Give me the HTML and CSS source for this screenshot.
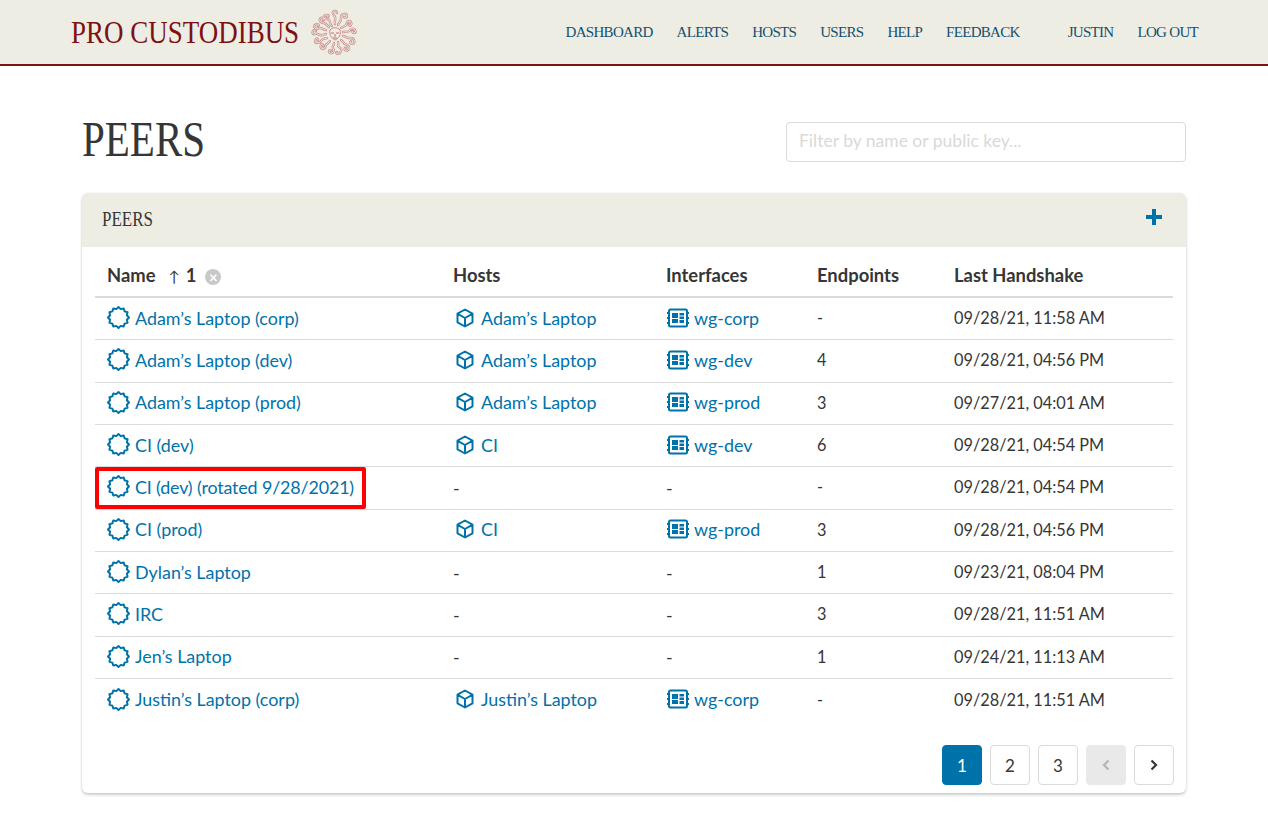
FILE: index.html
```html
<!DOCTYPE html>
<html lang="en">
<head>
<meta charset="utf-8">
<title>Peers - Pro Custodibus</title>
<link rel="stylesheet" href="styles.css">
</head>
<body>
<svg class="defs" width="0" height="0" aria-hidden="true">
  <symbol id="peer" viewBox="0 0 22 22">
    <path fill="none" stroke="currentColor" stroke-width="1.900" stroke-linejoin="round" d="M21 11L19.020 13.150 19.660 16 16.870 16.870 16 19.660 13.150 19.020 11 21 8.850 19.020 6 19.660 5.130 16.870 2.340 16 2.980 13.150 1 11 2.980 8.850 2.340 6 5.130 5.130 6 2.340 8.850 2.980 11 1 13.150 2.980 16 2.340 16.870 5.130 19.660 6 19.020 8.850z"/>
  </symbol>
  <symbol id="cube" viewBox="0 0 20 20">
    <path fill="none" stroke="currentColor" stroke-width="2" stroke-linejoin="round" d="M10 1.500l7.500 4.200v8.600L10 18.500l-7.500-4.200V5.700zM2.700 5.800L10 10l7.300-4.200M10 10v8.500"/>
  </symbol>
  <symbol id="iface" viewBox="0 0 22 20">
    <rect x="2" y="1.500" width="18" height="17" rx="1.500" fill="none" stroke="currentColor" stroke-width="2"/>
    <path fill="currentColor" d="M0 4h2v2H0zM0 9h2v2H0zM0 14h2v2H0zM20 4h2v2h-2zM20 9h2v2h-2zM20 14h2v2h-2zM5 5h6v5H5zM5 11h6v4H5zM12.500 5H17v2.500h-4.500zM12.500 8.500H17V11h-4.500zM12.500 12H17v3h-4.500z"/>
  </symbol>
  <symbol id="snakes" viewBox="0 0 48 46">
    <path d="M21 17c-3-2-1-4-3-6s-4 0-5-2 1-3 3-3 2 2 0 2"/>
    <path d="M24 15c-1-3 1-4 0-7s-3-3-2-5 4-1 4 1"/>
    <path d="M27 16c1-3 3-3 3-6s0-4 2-5 4 0 4 2-2 2-3 1"/>
    <path d="M30 19c2-2 4-1 5-3s1-4 3-4 3 2 2 4-3 0-2-1"/>
    <path d="M32 23c3-1 4 1 6-1s3-3 5-2 2 4 0 4-2-2-1-2"/>
    <path d="M32 27c3 0 3 2 6 2s4 0 5 2 0 4-2 4-2-2-1-3"/>
    <path d="M30 31c2 1 2 3 4 4s4 1 4 4-3 3-4 2 0-3 1-2"/>
    <path d="M27 33c1 2-1 4 1 5s3 2 2 4-1 3-3 3-2-2-1-2"/>
    <path d="M23 34c0 2-2 3-1 5s1 4-1 5-3-1-3-2 2-1 2 0"/>
    <path d="M19 32c-1 2-3 2-4 4s-1 4-3 4-3-2-2-4 3 0 2 1"/>
    <path d="M16 29c-2 1-3 0-5 2s-2 3-5 3-2-3-1-4 2 0 2 1"/>
    <path d="M15 25c-3 0-3 2-6 1s-3-2-5-1-3-1-2-3 3-1 3 0"/>
    <path d="M15 21c-3 0-3-2-6-2s-3 2-5 0 0-4 2-4 2 2 1 2"/>
    <path d="M18 18c-2-1-2-3-5-4s-3 0-4-2 1-4 3-3 1 3 0 2"/>
  </symbol>
</svg>

<header class="navbar">
  <div class="brand">
    <span class="brand-name">PRO CUSTODIBUS</span>
    <svg class="medusa" viewBox="0 0 48 46" aria-hidden="true">
      <use href="#snakes" class="snake-line"/>
      <use href="#snakes" class="snake-fill"/>
      <path class="medusa-face" d="M19 21c2-3 8-3 10 0 1 4 0 8-5 10-4-2-6-6-5-10z"/>
      <path class="medusa-mark" d="M20 24h3M25 24h3M24 25v3M22 29h4"/>
    </svg>
  </div>
  <nav class="nav-links">
    <a href="#">DASHBOARD</a>
    <a href="#">ALERTS</a>
    <a href="#">HOSTS</a>
    <a href="#">USERS</a>
    <a href="#">HELP</a>
    <a href="#">FEEDBACK</a>
    <a href="#" class="nav-user">JUSTIN</a>
    <a href="#">LOG OUT</a>
  </nav>
</header>

<main class="page">
  <div class="title-row">
    <h1>PEERS</h1>
    <input class="filter" type="text" placeholder="Filter by name or public key...">
  </div>

  <section class="card">
    <div class="card-head">
      <h2>PEERS</h2>
      <a href="#" class="add" aria-label="Add"><svg viewBox="0 0 16 16"><path fill="currentColor" d="M6 0h4v6h6v4h-6v6H6v-6H0V6h6z"/></svg></a>
    </div>
    <div class="card-body">
      <div class="grid head">
        <div class="cell"><span class="th-name">Name</span><span class="arrow">↑</span><span class="sort">1</span><span class="clear">×</span></div>
        <div class="cell">Hosts</div>
        <div class="cell">Interfaces</div>
        <div class="cell">Endpoints</div>
        <div class="cell">Last Handshake</div>
      </div>

      <div class="grid row">
        <div class="cell"><a href="#"><svg class="i-peer"><use href="#peer"/></svg>Adam’s Laptop (corp)</a></div>
        <div class="cell"><a href="#"><svg class="i-cube"><use href="#cube"/></svg>Adam’s Laptop</a></div>
        <div class="cell"><a href="#"><svg class="i-iface"><use href="#iface"/></svg>wg-corp</a></div>
        <div class="cell">-</div>
        <div class="cell">09/28/21, 11:58 AM</div>
      </div>
      <div class="grid row">
        <div class="cell"><a href="#"><svg class="i-peer"><use href="#peer"/></svg>Adam’s Laptop (dev)</a></div>
        <div class="cell"><a href="#"><svg class="i-cube"><use href="#cube"/></svg>Adam’s Laptop</a></div>
        <div class="cell"><a href="#"><svg class="i-iface"><use href="#iface"/></svg>wg-dev</a></div>
        <div class="cell">4</div>
        <div class="cell">09/28/21, 04:56 PM</div>
      </div>
      <div class="grid row">
        <div class="cell"><a href="#"><svg class="i-peer"><use href="#peer"/></svg>Adam’s Laptop (prod)</a></div>
        <div class="cell"><a href="#"><svg class="i-cube"><use href="#cube"/></svg>Adam’s Laptop</a></div>
        <div class="cell"><a href="#"><svg class="i-iface"><use href="#iface"/></svg>wg-prod</a></div>
        <div class="cell">3</div>
        <div class="cell">09/27/21, 04:01 AM</div>
      </div>
      <div class="grid row">
        <div class="cell"><a href="#"><svg class="i-peer"><use href="#peer"/></svg>CI (dev)</a></div>
        <div class="cell"><a href="#"><svg class="i-cube"><use href="#cube"/></svg>CI</a></div>
        <div class="cell"><a href="#"><svg class="i-iface"><use href="#iface"/></svg>wg-dev</a></div>
        <div class="cell">6</div>
        <div class="cell">09/28/21, 04:54 PM</div>
      </div>
      <div class="grid row">
        <div class="cell"><a href="#" class="tight"><svg class="i-peer"><use href="#peer"/></svg>CI (dev) (rotated 9/28/2021)</a><span class="highlight"></span></div>
        <div class="cell">-</div>
        <div class="cell">-</div>
        <div class="cell">-</div>
        <div class="cell">09/28/21, 04:54 PM</div>
      </div>
      <div class="grid row">
        <div class="cell"><a href="#"><svg class="i-peer"><use href="#peer"/></svg>CI (prod)</a></div>
        <div class="cell"><a href="#"><svg class="i-cube"><use href="#cube"/></svg>CI</a></div>
        <div class="cell"><a href="#"><svg class="i-iface"><use href="#iface"/></svg>wg-prod</a></div>
        <div class="cell">3</div>
        <div class="cell">09/28/21, 04:56 PM</div>
      </div>
      <div class="grid row">
        <div class="cell"><a href="#"><svg class="i-peer"><use href="#peer"/></svg>Dylan’s Laptop</a></div>
        <div class="cell">-</div>
        <div class="cell">-</div>
        <div class="cell">1</div>
        <div class="cell">09/23/21, 08:04 PM</div>
      </div>
      <div class="grid row">
        <div class="cell"><a href="#"><svg class="i-peer"><use href="#peer"/></svg>IRC</a></div>
        <div class="cell">-</div>
        <div class="cell">-</div>
        <div class="cell">3</div>
        <div class="cell">09/28/21, 11:51 AM</div>
      </div>
      <div class="grid row">
        <div class="cell"><a href="#"><svg class="i-peer"><use href="#peer"/></svg>Jen’s Laptop</a></div>
        <div class="cell">-</div>
        <div class="cell">-</div>
        <div class="cell">1</div>
        <div class="cell">09/24/21, 11:13 AM</div>
      </div>
      <div class="grid row last">
        <div class="cell"><a href="#"><svg class="i-peer"><use href="#peer"/></svg>Justin’s Laptop (corp)</a></div>
        <div class="cell"><a href="#"><svg class="i-cube"><use href="#cube"/></svg>Justin’s Laptop</a></div>
        <div class="cell"><a href="#"><svg class="i-iface"><use href="#iface"/></svg>wg-corp</a></div>
        <div class="cell">-</div>
        <div class="cell">09/28/21, 11:51 AM</div>
      </div>

      <div class="pager">
        <a href="#" class="page-btn current">1</a>
        <a href="#" class="page-btn">2</a>
        <a href="#" class="page-btn">3</a>
        <a href="#" class="page-btn disabled"><svg viewBox="0 0 10 14"><path d="M7.500 2.500L3 7l4.500 4.500" fill="none" stroke="currentColor" stroke-width="2.200"/></svg></a>
        <a href="#" class="page-btn"><svg viewBox="0 0 10 14"><path d="M2.500 2.500L7 7l-4.500 4.500" fill="none" stroke="currentColor" stroke-width="2.200"/></svg></a>
      </div>
    </div>
  </section>
</main>
</body>
</html>
```
FILE: styles.css
```css
* { box-sizing: border-box; }
html, body { margin: 0; padding: 0; }
body {
  background: #fff;
  color: #363636;
  font-family: "Lato", "Noto Sans", sans-serif;
  font-size: 17.900px;
  height: 819px;
  overflow: hidden;
}
a { color: #0072aa; text-decoration: none; }
.defs { position: absolute; }

.navbar {
  height: 66px;
  background: #eeede4;
  border-bottom: 2px solid #7d1013;
  display: flex;
  align-items: center;
  padding: 0 70px 0 71px;
  justify-content: space-between;
}
.brand { display: flex; align-items: center; gap: 11px; }
.brand-name {
  display: inline-block;
  font-family: "Liberation Serif", serif;
  font-size: 32px;
  color: #7d1013;
  transform: scaleX(.843);
  transform-origin: left center;
  margin-right: -42px;
}
.medusa { width: 48px; height: 46px; }
.medusa use { fill: none; stroke-linecap: round; }
.snake-line { stroke: #c98f8b; stroke-width: 2.400px; }
.snake-fill { stroke: #f5e9e4; stroke-width: 1px; }
.medusa-face { fill: #f5e9e4; stroke: #c98f8b; stroke-width: 1px; }
.medusa-mark { fill: none; stroke: #b5726e; stroke-width: 1px; }
.nav-links { display: flex; gap: 24px; }
.nav-links a {
  font-family: "Liberation Serif", serif;
  font-size: 15px;
  letter-spacing: -0.700px;
  color: #14506f;
}
.nav-links .nav-user { margin-left: 24px; }

.page { padding: 0 82px; }
.title-row {
  height: 127px;
  display: flex;
  align-items: center;
  justify-content: space-between;
  padding-top: 25px;
}
h1 {
  margin: 0 0 7px;
  font-family: "Liberation Serif", serif;
  font-weight: 400;
  font-size: 50px;
  color: #363636;
  transform: scaleX(.82);
  transform-origin: left center;
}
.filter {
  width: 400px;
  height: 40px;
  border: 1px solid #dbdbdb;
  border-radius: 4px;
  padding: 0 12px 3px;
  font: inherit;
  font-size: 17.500px;
}
.filter::placeholder { color: #d9d9d9; opacity: 1; }

.card {
  height: 600px;
  border-radius: 6px;
  background: #fff;
  box-shadow: 0 2px 3px rgba(10, 10, 10, .2), 0 0 0 1px rgba(10, 10, 10, .02);
}
.card-head {
  height: 54px;
  background: #eeede4;
  border-radius: 6px 6px 0 0;
  display: flex;
  align-items: center;
  justify-content: space-between;
  padding: 0 24px 0 20px;
}
h2 {
  margin: 0 0 2px;
  font-family: "Liberation Serif", serif;
  font-weight: 400;
  font-size: 20px;
  color: #363636;
  transform: scaleX(.85);
  transform-origin: left center;
}
.add { display: block; width: 16px; height: 16px; margin-bottom: 6px; }
.add svg { display: block; width: 16px; height: 16px; }

.card-body { padding: 0 12px 0 13px; }
.grid {
  display: grid;
  width: 1078px;
  grid-template-columns: 346px 213px 151px 137px 231px;
  align-items: center;
}
.cell { padding: 0 12px; white-space: nowrap; position: relative; }
.head {
  height: 51px;
  border-bottom: 2px solid #dbdbdb;
  font-weight: 700;
  font-size: 18.400px;
  padding-top: 6px;
}
.row {
  height: 42.330px;
  border-bottom: 1px solid #dbdbdb;
}
.row.last { border-bottom: 0; }
.row a { display: flex; align-items: center; height: 22px; margin-bottom: 2px; }
.row a.tight { letter-spacing: -0.150px; }
.row .cell:nth-child(n+4) { font-size: 16.300px; padding-bottom: 2px; }

.arrow { margin-left: 13px; font-weight: 400; font-size: 15px; }
.sort { margin-left: 6px; font-weight: 700; }
.clear {
  display: inline-flex;
  align-items: center;
  justify-content: center;
  width: 16px;
  height: 16px;
  margin-left: 9px;
  border-radius: 50%;
  background: #c9c9c9;
  color: #fff;
  font-size: 15px;
  line-height: 1;
  vertical-align: -1px;
}
.i-peer { flex: none; width: 23px; height: 23px; margin-right: 5px; }
.i-cube { flex: none; width: 20px; height: 20px; margin-right: 6px; margin-left: 2px; }
.i-iface { flex: none; width: 22px; height: 20px; margin-right: 5px; margin-left: 1px; }

.highlight {
  position: absolute;
  left: 0;
  top: 50%;
  margin-top: -21px;
  width: 271px;
  height: 42px;
  border: 4px solid #f00;
  border-radius: 2px;
}

.pager {
  display: flex;
  justify-content: flex-end;
  gap: 8px;
  margin-top: 24px;
}
.page-btn {
  width: 40px;
  height: 40px;
  display: flex;
  align-items: center;
  justify-content: center;
  border: 1px solid #dbdbdb;
  border-radius: 4px;
  color: #363636;
  font-size: 17px;
}
.page-btn svg { width: 10px; height: 14px; }
.page-btn.current { background: #0072aa; border-color: #0072aa; color: #fff; }
.page-btn.disabled { background: #e9e9e9; border-color: #e9e9e9; color: #b5b5b5; }
```
